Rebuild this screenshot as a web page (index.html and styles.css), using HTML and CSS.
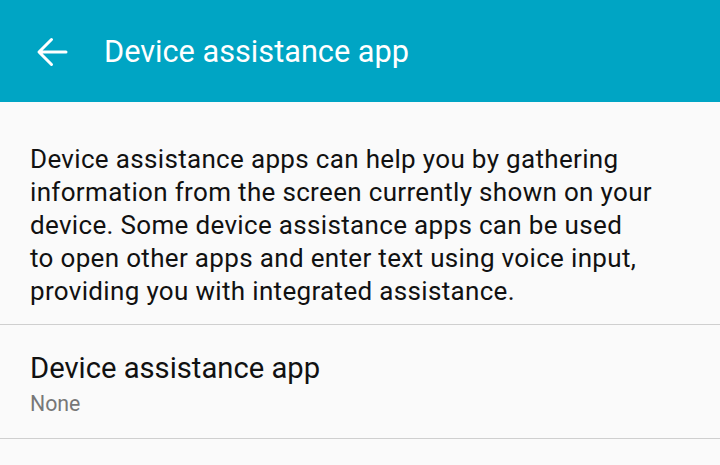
FILE: index.html
```html
<!DOCTYPE html>
<html>
<head>
<meta charset="utf-8">
<link rel="stylesheet" href="styles.css">
</head>
<body>
<header class="appbar">
  <svg class="back" width="32" height="32" viewBox="0 0 32 32">
    <path d="M30 16H4M15.5 3.5L3 16l12.5 12.5" fill="none" stroke="#fff" stroke-width="3" stroke-linecap="round" stroke-linejoin="round"/>
  </svg>
  <h1 class="title">Device assistance app</h1>
</header>
<main>
  <p class="desc">Device assistance apps can help you by gathering<br>information from the screen currently shown on your<br>device. Some device assistance apps can be used<br>to open other apps and enter text using voice input,<br>providing you with integrated assistance.</p>
  <div class="item">
    <div class="item-title">Device assistance app</div>
    <div class="item-sub">None</div>
  </div>
</main>
</body>
</html>
```
FILE: styles.css
```css
html, body {
  margin: 0;
  padding: 0;
}
body {
  width: 720px;
  height: 465px;
  overflow: hidden;
  background: #fafafa;
  font-family: Roboto, "Noto Sans", sans-serif;
}
.appbar {
  height: 102px;
  background: #00a5c4;
  display: flex;
  align-items: center;
  padding-left: 36px;
  box-sizing: border-box;
}
.back {
  display: block;
  margin-top: 2px;
}
.title {
  margin: 0 0 0 36px;
  color: #fff;
  font-weight: 400;
  font-size: 30.7px;
  line-height: 1;
  margin-top: 2px;
}
.desc {
  margin: 0;
  padding: 41px 30px 16px;
  font-size: 26px;
  letter-spacing: 0.33px;
  line-height: 33px;
  color: #111;
  border-bottom: 1px solid #cfcfcf;
}
.item {
  padding: 25px 30px 21px;
  border-bottom: 1px solid #cfcfcf;
}
.item-title {
  font-size: 29.2px;
  line-height: 36px;
  color: #111;
}
.item-sub {
  margin-top: 5px;
  font-size: 21.3px;
  line-height: 26px;
  color: #777;
}
```
